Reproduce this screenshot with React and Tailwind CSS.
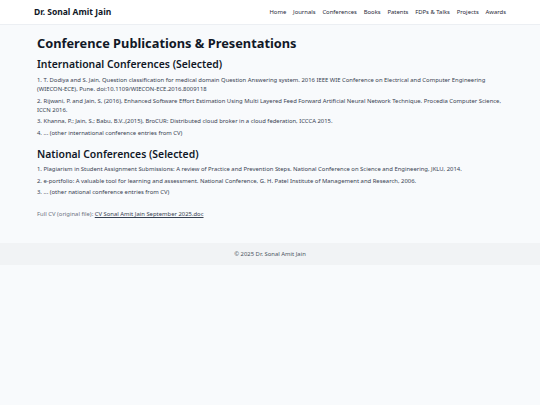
export default function App() {
  const nav = ["Home", "Journals", "Conferences", "Books", "Patents", "FDPs & Talks", "Projects", "Awards"];
  const intl = [
    "1. T. Dodiya and S. Jain, Question classification for medical domain Question Answering system. 2016 IEEE WIE Conference on Electrical and Computer Engineering (WIECON-ECE), Pune. doi:10.1109/WIECON-ECE.2016.8009118",
    "2. Rijwani, P. and Jain, S, (2016), Enhanced Software Effort Estimation Using Multi Layered Feed Forward Artificial Neural Network Technique. Procedia Computer Science, ICCN 2016.",
    "3. Khanna, P.; Jain, S.; Babu, B.V.,(2015), BroCUR: Distributed cloud broker in a cloud federation, ICCCA 2015.",
    "4. ... (other international conference entries from CV)",
  ];
  const natl = [
    "1. Plagiarism in Student Assignment Submissions: A review of Practice and Prevention Steps. National Conference on Science and Engineering, JKLU, 2014.",
    "2. e-portfolio: A valuable tool for learning and assessment. National Conference, G. H. Patel Institute of Management and Research, 2006.",
    "3. ... (other national conference entries from CV)",
  ];
  return (
    <div className="min-h-[405px] bg-[#f8fafc] text-[#1f2937]" style={{ fontFamily: '"Noto Sans", sans-serif' }}>
      <header className="bg-white border-b border-[#eceff3] h-[25px]">
        <div className="flex items-center justify-between h-full pl-[34px] pr-[34px]">
          <div className="text-[8.5px] font-bold text-[#111827]">Dr. Sonal Amit Jain</div>
          <nav className="flex gap-[6.8px] text-[5.9px] text-[#1f2937]">
            {nav.map((n) => (
              <span key={n}>{n}</span>
            ))}
          </nav>
        </div>
      </header>
      <main className="pl-[37px] pr-[34px] pt-[9px] pb-[24px]">
        <h1 className="text-[12.8px] font-bold leading-[18px] text-[#111827]">Conference Publications &amp; Presentations</h1>
        <h2 className="text-[10.4px] font-semibold leading-[15px] mt-[5px] text-[#111827]">International Conferences (Selected)</h2>
        <div className="mt-[4px] text-[5.9px] leading-[9px] text-[#374151]">
          {intl.map((t) => (
            <p key={t} className="mb-[2.7px]">{t}</p>
          ))}
        </div>
        <h2 className="text-[10.4px] font-semibold leading-[15px] mt-[9px] text-[#111827]">National Conferences (Selected)</h2>
        <div className="mt-[3px] text-[5.9px] leading-[9px] text-[#374151]">
          {natl.map((t) => (
            <p key={t} className="mb-[2.7px]">{t}</p>
          ))}
        </div>
        <p className="mt-[12.5px] text-[5.9px] leading-[9px] text-[#6b7280]">
          Full CV (original file): <a className="underline text-[#374151]">CV Sonal Amit Jain September 2025.doc</a>
        </p>
      </main>
      <footer className="bg-[#f1f3f5] h-[22px] flex items-center justify-center text-[5.9px] text-[#4b5563]">
        © 2025 Dr. Sonal Amit Jain
      </footer>
    </div>
  );
}
